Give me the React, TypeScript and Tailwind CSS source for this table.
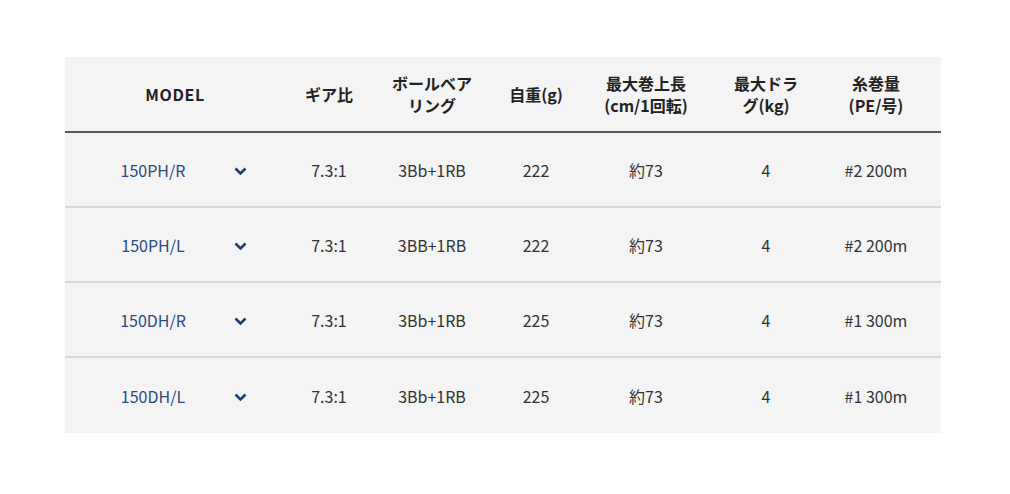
import React from 'react';

interface SpecRow {
  model: string;
  gear: string;
  bearing: string;
  weight: string;
  retrieve: string;
  drag: string;
  line: string;
}

const rows: SpecRow[] = [
  { model: '150PH/R', gear: '7.3:1', bearing: '3Bb+1RB', weight: '222', retrieve: '約73', drag: '4', line: '#2 200m' },
  { model: '150PH/L', gear: '7.3:1', bearing: '3BB+1RB', weight: '222', retrieve: '約73', drag: '4', line: '#2 200m' },
  { model: '150DH/R', gear: '7.3:1', bearing: '3Bb+1RB', weight: '225', retrieve: '約73', drag: '4', line: '#1 300m' },
  { model: '150DH/L', gear: '7.3:1', bearing: '3Bb+1RB', weight: '225', retrieve: '約73', drag: '4', line: '#1 300m' },
];

const cols = 'grid grid-cols-[220px_88px_118px_90px_130px_110px_110px_10px]';

const Chevron: React.FC = () => (
  <svg width="13" height="9" viewBox="0 0 13 9" className="text-[#1f3a6b]">
    <polyline points="1.5,1.5 6.5,6.5 11.5,1.5" fill="none" stroke="currentColor" strokeWidth="2.5" />
  </svg>
);

const App: React.FC = () => {
  return (
    <div
      className="min-h-screen bg-white pt-[57px] pl-[65px]"
      style={{ fontFamily: '"Noto Sans CJK JP", "Noto Sans", sans-serif' }}
    >
      <div className="w-[876px] bg-[#f4f4f4]">
        {/* header */}
        <div className={`${cols} h-[76px] border-b-2 border-[#5a5a5a] items-center text-center text-[16px] font-bold leading-[22px] text-[#222]`}>
          <div className="tracking-[0.04em]">MODEL</div>
          <div>ギア比</div>
          <div>ボールベア<br />リング</div>
          <div>自重(g)</div>
          <div>最大巻上長<br />(cm/1回転)</div>
          <div>最大ドラ<br />グ(kg)</div>
          <div>糸巻量<br />(PE/号)</div>
          <div />
        </div>

        {rows.map((r, i) => (
          <div
            key={i}
            className={`${cols} h-[75px] items-center text-center text-[16px] text-[#333] ${i < rows.length - 1 ? 'border-b-2 border-[#d8d8d8]' : ''}`}
          >
            <div className="flex items-center pl-[13px]">
              <span className="w-[150px] text-center text-[#2b4a7e]">{r.model}</span>
              <span className="ml-[6px] mt-[3px] flex items-center"><Chevron /></span>
            </div>
            <div>{r.gear}</div>
            <div>{r.bearing}</div>
            <div>{r.weight}</div>
            <div>{r.retrieve}</div>
            <div>{r.drag}</div>
            <div>{r.line}</div>
            <div />
          </div>
        ))}
      </div>
    </div>
  );
};

export default App;
